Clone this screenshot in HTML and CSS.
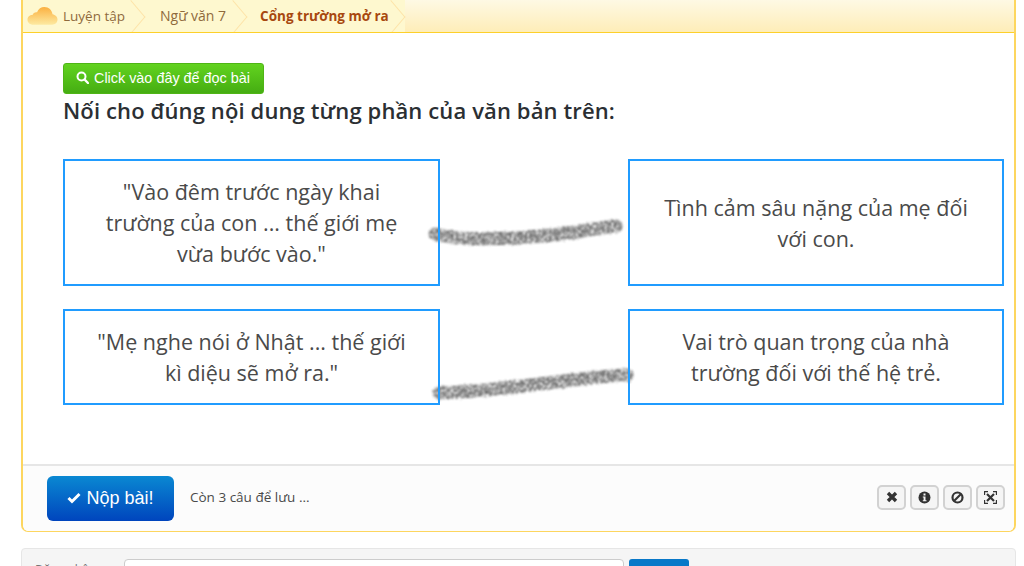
FILE: index.html
```html
<!DOCTYPE html>
<html lang="vi">
<head>
<meta charset="utf-8">
<title>Cổng trường mở ra</title>
<link rel="stylesheet" href="styles.css">
</head>
<body>
<div class="panel">
  <nav class="crumbs">
    <div class="trail">
      <svg class="cloud" width="31" height="20" viewBox="0 0 34 22"><defs><linearGradient id="cg" x1="0" y1="0" x2="0" y2="1"><stop offset="0" stop-color="#fbb040"/><stop offset="1" stop-color="#fde9a0"/></linearGradient></defs><path d="M7 20.500C3 20.500 .5 18 .5 15c0-3 2.300-5.200 5.500-5.200C7 7.500 9 6.500 11 7c1.500-4 4.500-6 8-6 5 0 8.500 3.500 9 8 3 .5 5.500 2.800 5.500 5.800 0 3.200-2.500 5.700-6 5.700z" fill="url(#cg)"/></svg>
      <a class="crumb first">Luyện tập</a>
      <a class="crumb second">Ngữ văn 7</a>
      <a class="crumb current">Cổng trường mở ra</a>
    </div>
  </nav>
  <main class="content">
    <button class="read-btn"><svg class="ico" width="13" height="13" viewBox="0 0 13 13"><circle cx="5.500" cy="5.500" r="4" fill="none" stroke="#fff" stroke-width="2"/><path d="M8.500 8.500 12 12" stroke="#fff" stroke-width="2.400" stroke-linecap="round"/></svg>Click vào đây để đọc bài</button>
    <h1 class="question">Nối cho đúng nội dung từng phần của văn bản trên:</h1>
    <div class="match">
      <div class="box">"Vào đêm trước ngày khai trường của con ... thế giới mẹ vừa bước vào."</div>
      <div class="gap"></div>
      <div class="box">Tình cảm sâu nặng của mẹ đối với con.</div>
      <div class="box">"Mẹ nghe nói ở Nhật ... thế giới kì diệu sẽ mở ra."</div>
      <div class="gap"></div>
      <div class="box">Vai trò quan trọng của nhà trường đối với thế hệ trẻ.</div>
      <svg class="strokes" width="222" height="250" viewBox="0 0 222 250">
        <defs>
          <filter id="brush" x="-10%" y="-100%" width="120%" height="300%">
            <feTurbulence type="fractalNoise" baseFrequency="0.45" numOctaves="2" seed="4" result="n"/>
            <feDisplacementMap in="SourceGraphic" in2="n" scale="4" result="d"/>
            <feColorMatrix in="n" type="matrix" values="0 0 0 0 0  0 0 0 0 0  0 0 0 0 0  3.200 0 0 0 -0.950" result="t"/>
            <feComposite in="d" in2="t" operator="in"/>
            <feGaussianBlur stdDeviation="0.800"/>
          </filter>
        </defs>
        <path class="stroke" d="M12 75C40 82 85 80 120 77S170 69 193 67" filter="url(#brush)"/>
        <path class="stroke" d="M16 234C60 232 110 226 150 221S190 217 204 216" filter="url(#brush)"/>
      </svg>
    </div>
  </main>
  <footer class="bar">
    <button class="submit"><svg class="check" width="14" height="12" viewBox="0 0 14 12"><path d="M1.500 6 5 9.500 12.500 2" fill="none" stroke="#fff" stroke-width="3"/></svg>Nộp bài!</button>
    <span class="status">Còn 3 câu để lưu ...</span>
    <div class="tools">
      <button class="tool"><svg width="12" height="12" viewBox="0 0 12 12"><path d="M2 2l8 8M10 2l-8 8" stroke="#333" stroke-width="3.400"/></svg></button>
      <button class="tool"><svg width="13" height="13" viewBox="0 0 13 13"><circle cx="6.500" cy="6.500" r="6" fill="#333"/><rect x="5.500" y="2.500" width="2" height="2" fill="#f5f5f5"/><path d="M4.800 5.600h2.700v3.600h1v1H4.800v-1h.8V6.600h-.8z" fill="#f5f5f5"/></svg></button>
      <button class="tool"><svg width="13" height="13" viewBox="0 0 13 13"><circle cx="6.500" cy="6.500" r="5" fill="none" stroke="#333" stroke-width="2.200"/><path d="M3 10 10 3" stroke="#333" stroke-width="2.200"/></svg></button>
      <button class="tool"><svg width="13" height="13" viewBox="0 0 13 13"><path d="M.5 4V.5H4M9 .5h3.500V4M12.500 9v3.500H9M4 12.500H.5V9" fill="none" stroke="#333" stroke-width="1.300"/><path d="M3 3l7 7M10 3l-7 7" stroke="#333" stroke-width="2.200"/></svg></button>
    </div>
  </footer>
</div>
<section class="below">
  <span class="below-label">Đăng nhập</span>
  <input class="below-input" type="text" aria-label="Tìm kiếm">
  <button class="below-btn" aria-label="Gửi"></button>
</section>
</body>
</html>
```
FILE: styles.css
```css
* { box-sizing: border-box; }
html, body { height: 100%; }
body {
  margin: 0;
  padding: 0 8px 0 21px;
  overflow: hidden;
  background: #fff;
  color: #333;
  font-family: "Open Sans", "Noto Sans", sans-serif;
}
button { font-family: inherit; cursor: pointer; }
.panel {
  height: 532px;
  display: flex;
  flex-direction: column;
  border: 2px solid #fdd65f;
  border-top: 0;
  border-bottom-width: 1px;
  border-radius: 0 0 7px 7px;
}
.crumbs {
  height: 33px;
  flex: none;
  display: flex;
  overflow: hidden;
  border-bottom: 1px solid #fdd02a;
  background: linear-gradient(#fef9e4, #feedb8);
}
.trail {
  isolation: isolate;
  display: flex;
  align-items: center;
  height: 32px;
  padding-left: 4px;
  background: #fef8cf;
}
.cloud { flex: none; margin-right: 5px; }
.crumb {
  position: relative;
  height: 32px;
  display: flex;
  align-items: center;
  padding-bottom: 1px;
  font-size: 13.500px;
  color: #8f6a3c;
  padding-right: 20px;
}
.crumb::after {
  content: "";
  position: absolute;
  right: 2px;
  top: 4.500px;
  z-index: -1;
  width: 23px;
  height: 23px;
  transform: scaleX(.85) rotate(45deg);
  background: #fef8cf;
  border-top: 1px solid #fde3a8;
  border-right: 1px solid #fde3a8;
}
.crumb.second { padding-left: 15px; padding-right: 21px; font-size: 14px; }
.crumb.current {
  padding-left: 13px;
  padding-right: 16px;
  font-weight: 700;
  font-size: 13.500px;
  color: #a8480f;
}
.content {
  flex: 1;
  min-height: 0;
  padding: 30px 10px 0 40px;
}
.read-btn {
  display: flex;
  align-items: center;
  gap: 5px;
  width: 201px;
  height: 31px;
  padding: 0 0 2px 12px;
  border: 1px solid #4fb516;
  border-radius: 3px;
  background: linear-gradient(#62d31f, #45ad12);
  color: #fff;
  font-family: "Liberation Sans", Arial, sans-serif;
  font-size: 14.400px;
}
.ico { flex: none; }
.question {
  margin: 0 0 33px;
  font-size: 22px;
  letter-spacing: .12px;
  line-height: 32px;
  font-weight: 600;
  color: #2b2f33;
}
.match {
  position: relative;
  display: grid;
  grid-template-columns: 377px 188px 376px;
  row-gap: 23px;
}
.box {
  position: relative;
  z-index: 1;
  display: flex;
  align-items: center;
  justify-content: center;
  text-align: center;
  padding: 15px 30px;
  border: 2px solid #209cff;
  font-size: 21.500px;
  line-height: 31px;
  font-weight: 400;
  color: #4a4a4a;
}
.strokes {
  position: absolute;
  left: 360px;
  top: 0;
  z-index: 0;
  pointer-events: none;
}
.stroke {
  fill: none;
  stroke: #333;
  stroke-width: 13;
  stroke-linecap: round;
  opacity: .75;
}
.bar {
  height: 67px;
  flex: none;
  display: flex;
  align-items: center;
  padding: 0 9px 0 24px;
  border-top: 2px solid #e6e6e6;
  border-radius: 0 0 6px 6px;
  background: #fcfcfc;
}
.submit {
  display: flex;
  align-items: center;
  justify-content: center;
  gap: 5px;
  width: 127px;
  height: 45px;
  padding: 0 0 1px;
  border: 0;
  border-radius: 6px;
  background: linear-gradient(#0a88d2, #0045bd);
  color: #fff;
  font-family: "Liberation Sans", Arial, sans-serif;
  font-size: 18px;
}
.status { margin: 0 0 3px 16px; font-size: 13.500px; color: #4a4a4a; }
.tools { margin: 0 0 3px auto; display: flex; gap: 4px; }
.tool {
  width: 29px;
  height: 25px;
  padding: 0;
  display: flex;
  align-items: center;
  justify-content: center;
  border: 2px solid #d2d2d2;
  border-radius: 5px;
  background: #f5f5f5;
}
.below {
  height: 60px;
  margin-top: 16px;
  display: flex;
  align-items: flex-start;
  padding: 10px 0 0 13px;
  border: 1px solid #e6e6e6;
  border-radius: 4px;
  background: #f5f5f5;
}
.below-label { width: 89px; font-size: 12px; line-height: 16px; padding-top: 3px; color: #777; }
.below-input {
  width: 500px;
  height: 34px;
  border: 1px solid #ccc;
  border-radius: 4px;
  background: #fff;
}
.below-btn {
  width: 60px;
  height: 34px;
  margin-left: 5px;
  border: 0;
  border-radius: 3px;
  background: #0878c8;
}
```
